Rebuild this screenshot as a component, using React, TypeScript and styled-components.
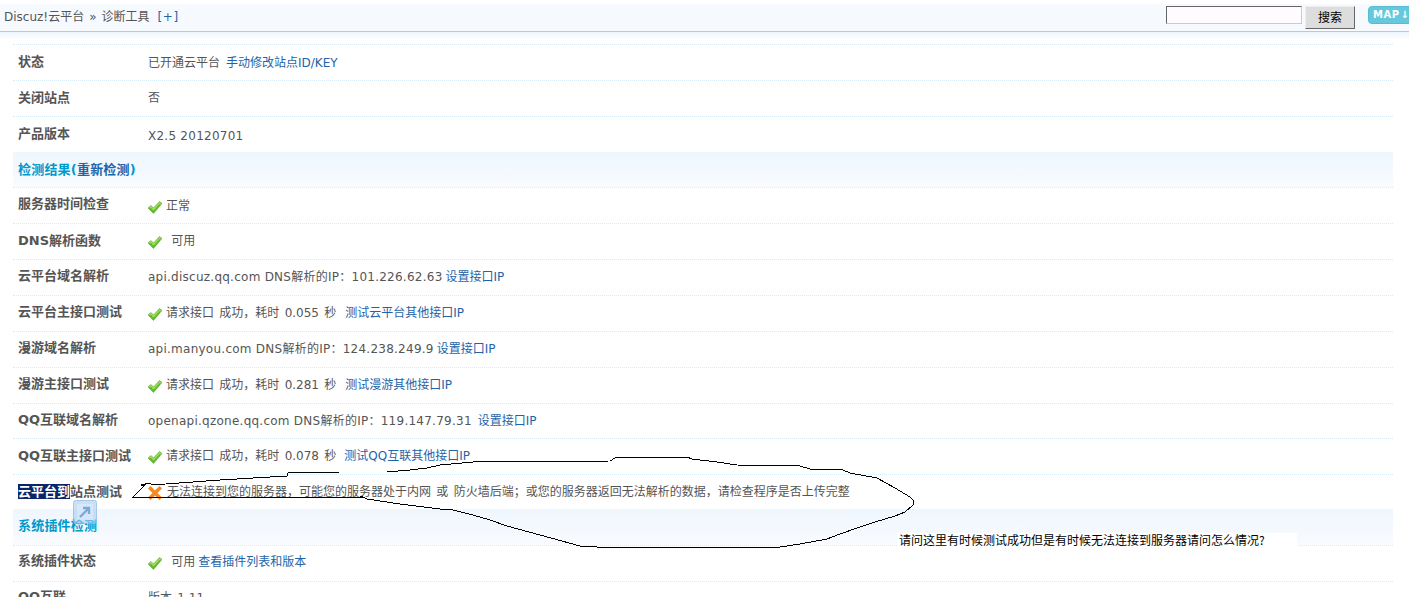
import React from "react";
import styled, { createGlobalStyle } from "styled-components";

const GlobalStyle = createGlobalStyle`
  html, body {
    margin: 0;
    padding: 0;
    height: 597px;
    overflow: hidden;
    background: #fff;
  }
  body {
    font: 12px "DejaVu Sans", "Noto Sans CJK SC", sans-serif;
    color: #555;
  }
`;

const Page = styled.div`
  position: relative;
  width: 1409px;
  height: 597px;
  overflow: hidden;
  padding-top: 4px;
  box-sizing: border-box;
`;

const TopBar = styled.div`
  display: flex;
  align-items: flex-start;
  justify-content: space-between;
  height: 27px;
  background: #f6fafe;
  border-bottom: 1px solid #b5cbdc;
`;

const Crumbs = styled.div`
  display: flex;
  gap: 5px;
  padding: 5px 0 0 4px;
  line-height: 17px;
  color: #555;
`;

const CrumbLink = styled.a`
  color: #1f63a8;
  margin-left: 3px;
  letter-spacing: 0.6px;
`;

const SearchArea = styled.div`
  display: flex;
  align-items: flex-start;
  padding-top: 2px;
`;

const SearchInput = styled.div`
  width: 134px;
  height: 16px;
  background: #fffbff;
  border: 1px solid;
  border-color: #666 #ccc #ccc #666;
`;

const SearchButton = styled.div`
  width: 48px;
  height: 21px;
  margin-left: 3px;
  background: #ddd;
  border: 1px solid;
  border-color: #eee #666 #666 #eee;
  color: #000;
  font-family: "Noto Sans CJK SC", sans-serif;
  text-align: center;
  line-height: 20px;
`;

const MapButton = styled.div`
  width: 48px;
  height: 18px;
  margin-left: 13px;
  margin-right: -7px;
  padding-left: 4px;
  box-sizing: border-box;
  background: #65c8dc;
  border: 1px solid #58bbd0;
  border-radius: 4px;
  color: #fff;
  font: bold 10px/16px "DejaVu Sans", sans-serif;
  letter-spacing: 0.5px;
  word-spacing: -3px;
  white-space: nowrap;
`;

const BarFade = styled.div`
  height: 7px;
  margin-bottom: 5px;
  background: linear-gradient(#eef6fd, #fbfdff);
`;

const Table = styled.div`
  margin: 0 16px 0 13px;
`;

const Row = styled.div<{ $short?: boolean; $section?: boolean }>`
  display: flex;
  box-sizing: border-box;
  height: ${(p) => (p.$short ? 35 : 36)}px;
  padding: 0 5px;
  border-top: 1px dotted ${(p) => (p.$section ? "transparent" : "#d6ecf9")};
  background: ${(p) =>
    p.$section ? "linear-gradient(#eef6fe, #f9fbff)" : "transparent"};
  background-origin: border-box;
`;

const Label = styled.div<{ $lift?: number }>`
  width: 130px;
  flex: none;
  font-size: 13px;
  font-weight: bold;
  line-height: 17px;
  padding-top: ${(p) => 8 - (p.$lift || 0)}px;
  color: #555;
  white-space: nowrap;
`;

const Selected = styled.span`
  background: #0a246a;
  color: #fff;
`;

const Value = styled.div<{ $drop?: number; $wide?: boolean }>`
  display: flex;
  align-items: flex-start;
  gap: 5px;
  padding-top: ${(p) => 9 + (p.$drop || 0)}px;
  line-height: 17px;
  white-space: pre;
  letter-spacing: ${(p) => (p.$wide ? "0.25px" : "0")};
  word-spacing: ${(p) => (p.$wide ? "0" : "1.5px")};
`;

const Link = styled.a<{ $nudge?: number }>`
  color: #1f63a8;
  letter-spacing: 0;
  word-spacing: 0;
  margin-left: ${(p) => p.$nudge || 0}px;
`;

const SectionTitle = styled.div<{ $lift?: number }>`
  font-size: 13px;
  font-weight: bold;
  line-height: 17px;
  padding-top: ${(p) => 8 - (p.$lift || 0)}px;
  color: #0099cc;
  letter-spacing: 0.2px;

  a {
    color: #1f63a8;
  }
`;

const Scribble = styled.svg`
  position: absolute;
  left: 0;
  top: 0;
  pointer-events: none;
`;

const DragIcon = styled.svg`
  position: absolute;
  left: 73px;
  top: 500px;
`;

const Caption = styled.div`
  position: absolute;
  left: 897px;
  top: 533px;
  width: 398px;
  height: 13px;
  padding-left: 2px;
  background: #fff;
  color: #000;
  font: 12px/13px "Noto Sans CJK SC", sans-serif;
  white-space: nowrap;
`;

const Tick = () => (
  <svg width="14" height="13" viewBox="0 0 14 13" style={{ flex: "none", marginTop: 3, marginRight: -1 }}>
    <path d="M0 7 L3 4.5 L5.5 7 L11.5 0.5 L14 2.5 L5.5 12.5 Z" fill="#62bb2c" stroke="#55a526" strokeWidth="0.5" />
    <path d="M1.5 7 L3 5.8 L5.5 8.5 L11.5 2 L12.8 3" fill="none" stroke="#a8e060" strokeWidth="1.2" />
  </svg>
);

const Cross = () => (
  <svg width="14" height="14" viewBox="0 0 14 14" style={{ flex: "none", marginTop: 2 }}>
    <path d="M2.5 2.5 L11.5 11.5 M11.5 2.5 L2.5 11.5" stroke="#f58a1e" strokeWidth="3.6" strokeLinecap="square" />
  </svg>
);

const outline =
  "M132 498 L140 490 L145 485 L141 485 L150 483 L152 485 L220 480 L287 476 L288 473 L340 472 L387 472 L410 470 L427 468 L440 465 L473 462 L610 461 L615 458 L623 457 L687 457 L692 459 L717 462 L737 465 L800 466 L810 469 L843 470 L850 473 L877 478 L895 488 L910 497 L913 500 L913 505 L905 512 L895 516 L875 522 L860 527 L840 534 L827 539 L800 544 L780 547 L597 547 L580 546 L540 535 L507 526 L490 520 L473 515 L453 510 L440 509 L400 504 L367 499 L363 497 L132 498 Z";

export default function App() {
  return (
    <Page>
      <GlobalStyle />
      <TopBar>
        <Crumbs>
          <span>Discuz!云平台</span>
          <span>»</span>
          <span>诊断工具</span>
          <CrumbLink>[+]</CrumbLink>
        </Crumbs>
        <SearchArea>
          <SearchInput />
          <SearchButton>搜索</SearchButton>
          <MapButton>MAP ↓</MapButton>
        </SearchArea>
      </TopBar>
      <BarFade />
      <Table>
        <Row>
          <Label>状态</Label>
          <Value $drop={1}>
            已开通云平台
            <Link $nudge={1}>手动修改站点ID/KEY</Link>
          </Value>
        </Row>
        <Row>
          <Label>关闭站点</Label>
          <Value>否</Value>
        </Row>
        <Row>
          <Label>产品版本</Label>
          <Value $drop={2} $wide>
            X2.5 20120701
          </Value>
        </Row>
        <Row $section $short>
          <SectionTitle>
            检测结果(<a>重新检测</a>)
          </SectionTitle>
        </Row>
        <Row>
          <Label $lift={1}>服务器时间检查</Label>
          <Value $drop={1}>
            <Tick />
            正常
          </Value>
        </Row>
        <Row>
          <Label>DNS解析函数</Label>
          <Value>
            <Tick />
            {" 可用"}
          </Value>
        </Row>
        <Row>
          <Label $lift={1}>云平台域名解析</Label>
          <Value $wide>
            api.discuz.qq.com DNS解析的IP：101.226.62.63
            <Link $nudge={-2}>设置接口IP</Link>
          </Value>
        </Row>
        <Row>
          <Label $lift={1}>云平台主接口测试</Label>
          <Value>
            <Tick />
            请求接口 成功，耗时 0.055 秒
            <Link $nudge={4}>测试云平台其他接口IP</Link>
          </Value>
        </Row>
        <Row>
          <Label $lift={1}>漫游域名解析</Label>
          <Value $wide>
            api.manyou.com DNS解析的IP：124.238.249.9
            <Link $nudge={-2}>设置接口IP</Link>
          </Value>
        </Row>
        <Row>
          <Label $lift={1}>漫游主接口测试</Label>
          <Value>
            <Tick />
            请求接口 成功，耗时 0.281 秒
            <Link $nudge={4}>测试漫游其他接口IP</Link>
          </Value>
        </Row>
        <Row $short>
          <Label $lift={1}>QQ互联域名解析</Label>
          <Value $wide>
            openapi.qzone.qq.com DNS解析的IP：119.147.79.31
            <Link $nudge={1}>设置接口IP</Link>
          </Value>
        </Row>
        <Row>
          <Label>QQ互联主接口测试</Label>
          <Value>
            <Tick />
            请求接口 成功，耗时 0.078 秒
            <Link $nudge={3}>测试QQ互联其他接口IP</Link>
          </Value>
        </Row>
        <Row $short>
          <Label>
            <Selected>云平台到</Selected>站点测试
          </Label>
          <Value>
            <Cross />
            无法连接到您的服务器，可能您的服务器处于内网 或 防火墙后端；或您的服务器返回无法解析的数据，请检查程序是否上传完整
          </Value>
        </Row>
        <Row $section>
          <SectionTitle $lift={1}>系统插件检测</SectionTitle>
        </Row>
        <Row>
          <Label $lift={2}>系统插件状态</Label>
          <Value $drop={-1}>
            <Tick />
            {" 可用"}
            <Link $nudge={-2}>查看插件列表和版本</Link>
          </Value>
        </Row>
        <Row>
          <Label $lift={2}>QQ互联</Label>
          <Value $drop={-1}>版本 1.11</Value>
        </Row>
      </Table>

      <Scribble width="1409" height="597" shapeRendering="crispEdges">
        <path d={outline} fill="none" stroke="#000" strokeWidth="1" />
      </Scribble>
      <DragIcon width="24" height="24" viewBox="0 0 24 24">
        <rect x="0.5" y="0.5" width="23" height="23" rx="2" fill="#a9cbef" fillOpacity="0.6" stroke="#8fb6e2" strokeOpacity="0.7" />
        <rect x="4" y="4" width="16" height="16" fill="#dfecfa" fillOpacity="0.6" />
        <path d="M7 17 L15 9 M10 8 H16 V14" fill="none" stroke="#6a9fd8" strokeWidth="2.4" strokeOpacity="0.85" />
      </DragIcon>
      <Caption>请问这里有时候测试成功但是有时候无法连接到服务器请问怎么情况?</Caption>
    </Page>
  );
}
